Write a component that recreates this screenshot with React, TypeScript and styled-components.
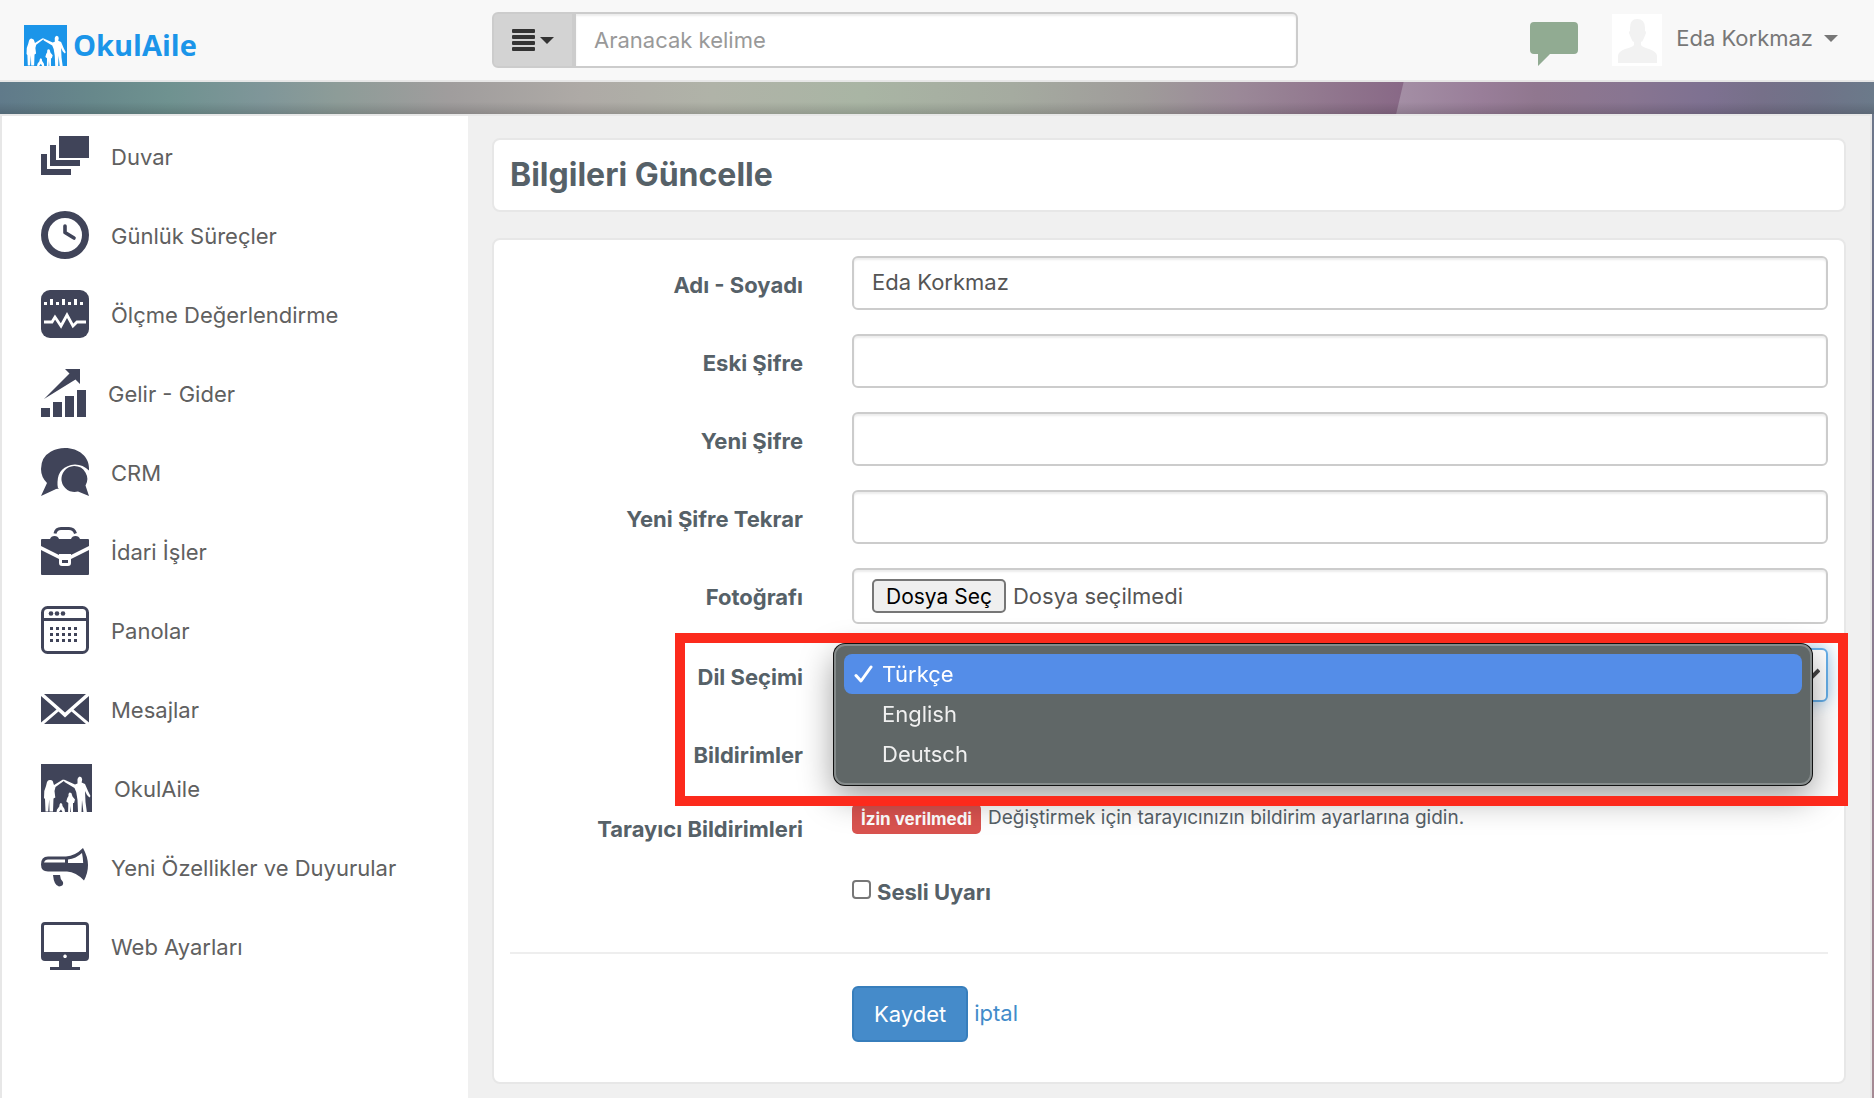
import React, { useState } from 'react';
import styled, { createGlobalStyle } from 'styled-components';

const ink = '#404459';
const slate = '#566168';

const GlobalStyle = createGlobalStyle`
  *, *::before, *::after { box-sizing: border-box; }
  body {
    margin: 0;
    color: ${slate};
    font-family: Inter, "Liberation Sans", sans-serif;
    font-size: 22px;
    line-height: 32px;
  }
  button, input, select { font: inherit; color: inherit; }
`;

const Page = styled.div`
  display: flex;
  flex-direction: column;
  min-height: 100vh;
  background: linear-gradient(#6b7a8a, #70708a 30%, #9b8494 75%, #a58a94);
`;

const Header = styled.header`
  display: flex;
  align-items: center;
  height: 82px;
  padding: 0 36px 0 24px;
  background: #f8f8f8;
  border-bottom: 2px solid #e7e7e7;
`;

const Brand = styled.a`
  display: flex;
  align-items: center;
  gap: 6px;
  flex: 0 0 468px;
  padding-top: 10px;
  color: #1b95e9;
  font: 700 29px/40px "Open Sans", "Noto Sans", sans-serif;
  text-decoration: none;
`;

const Search = styled.form`
  display: flex;
  flex: 0 1 806px;
  height: 56px;
`;

const SearchMenu = styled.button`
  display: flex;
  align-items: center;
  gap: 5px;
  width: 82px;
  padding: 0 18px;
  color: #333;
  background: #d3d3d3;
  border: 2px solid #ccc;
  border-radius: 6px 0 0 6px;
`;

const SearchInput = styled.input`
  flex: 1;
  min-width: 0;
  padding: 0 18px;
  color: #555;
  background: #fff;
  border: 2px solid #ccc;
  border-radius: 0 6px 6px 0;
  box-shadow: inset 0 2px 2px rgba(0, 0, 0, 0.075);
  &::placeholder { color: #999; opacity: 1; }
`;

const Account = styled.div`
  display: flex;
  align-items: center;
  margin-left: auto;
`;

const IconButton = styled.button`
  display: flex;
  margin-right: 34px;
  padding: 8px 0 0;
  background: none;
  border: 0;
`;

const Avatar = styled.svg`
  width: 50px;
  height: 52px;
  margin-right: 14px;
  background: #fff;
`;

const UserMenu = styled.button`
  display: flex;
  align-items: center;
  gap: 11px;
  padding: 0 0 4px;
  color: #777;
  background: none;
  border: 0;
`;

const Banner = styled.div`
  position: relative;
  height: 32px;
  background: linear-gradient(90deg, #607a8a, #67888b 5%, #6f9290 9%, #7f9699 14%, #8d9c98 18%,
    #a09d9d 24%, #aeaaa6 31%, #b0b3a8 38%, #a9b5a4 46%, #a5aba0 54%, #9f9b9a 61%, #9b8998 66%,
    #937a90 70%, #886886 75%);
  &::before {
    content: "";
    position: absolute;
    inset: 0;
    clip-path: polygon(74.9% 0, 100% 0, 100% 100%, 74.5% 100%);
    background: linear-gradient(90deg, #a48fa5 74.5%, #997e99 79%, #90778f 82%, #887591 87%,
      #7e7191 91%, #767089 94%, #6f7388 97%, #6b7a8a);
  }
  &::after {
    content: "";
    position: absolute;
    inset: 20px 0 0;
    background: linear-gradient(rgba(0, 0, 0, 0), rgba(0, 0, 0, 0.14));
  }
`;

const Body = styled.div`
  display: flex;
  flex: 1;
  margin-right: 2px;
  background: #f0f0f0;
  border: 2px solid #e7e7e7;
  border-bottom: 0;
`;

const Sidebar = styled.nav`
  flex: 0 0 466px;
  background: #fff;
`;

const NavList = styled.ul`
  margin: 0;
  padding: 1px 0 0;
  list-style: none;
`;

const NavLink = styled.a`
  display: flex;
  align-items: center;
  gap: 22px;
  height: 79px;
  padding-left: 39px;
  color: #606060;
  text-decoration: none;
  svg { flex: none; margin-bottom: 2px; }
`;

const Main = styled.main`
  flex: 1;
  min-width: 0;
  padding: 22px 24px 14px;
`;

const Panel = styled.section`
  padding: 16px;
  background: #fff;
  border: 2px solid #e7e7e7;
  border-radius: 8px;
  & + & { margin-top: 26px; }
`;

const Title = styled.h1`
  margin: 0;
  font-size: 32px;
  font-weight: 700;
  line-height: 38px;
`;

const Form = styled.form`
  display: flex;
  flex-direction: column;
  gap: 24px;
  padding-bottom: 24px;
`;

const Row = styled.div`
  display: grid;
  grid-template-columns: 293px minmax(0, 1fr);
  column-gap: 49px;
`;

const RowLabel = styled.label`
  height: 50px;
  padding-top: 13px;
  font-weight: 700;
  text-align: right;
`;

const Field = styled.div`
  grid-column: 2;
`;

const TextInput = styled.input`
  display: block;
  width: 100%;
  height: 54px;
  padding: 0 18px 2px;
  color: #555;
  background: #fff;
  border: 2px solid #ccc;
  border-radius: 6px;
  box-shadow: inset 0 2px 2px rgba(0, 0, 0, 0.075);
`;

const FileBox = styled.div`
  position: relative;
  display: flex;
  align-items: center;
  gap: 7px;
  height: 56px;
  padding: 0 18px;
  color: #555;
  border: 2px solid #ccc;
  border-radius: 6px;
  box-shadow: inset 0 2px 2px rgba(0, 0, 0, 0.075);
`;

const FileInput = styled.input`
  position: absolute;
  inset: 0;
  width: 100%;
  opacity: 0;
`;

const FileButton = styled.label`
  height: 34px;
  padding: 0 12px;
  color: #000;
  font-size: 21px;
  background: #efefef;
  border: 2px solid #767676;
  border-radius: 5px;
`;

const Highlight = styled.div`
  position: relative;
  display: flex;
  flex-direction: column;
  gap: 24px;
  &::after {
    content: "";
    position: absolute;
    z-index: 3;
    inset: -15px -20px -30px 165px;
    border: 10px solid #fc2a1c;
    pointer-events: none;
  }
`;

const SelectBox = styled(Field)`
  position: relative;
`;

const Select = styled.select`
  display: block;
  width: 100%;
  height: 54px;
  padding: 0 18px;
  color: #555;
  appearance: none;
  background: #fff;
  border: 2px solid #66afe9;
  border-radius: 6px;
  box-shadow: 0 0 16px rgba(102, 175, 233, 0.6);
`;

const Chevron = styled.svg`
  position: absolute;
  top: 19px;
  right: 8px;
`;

const Options = styled.ul`
  position: absolute;
  z-index: 2;
  top: -4px;
  left: -18px;
  right: 16px;
  margin: 0;
  padding: 8px 8px 9px;
  list-style: none;
  background: #606767;
  border: 2px solid #858b8b;
  border-radius: 11px;
  box-shadow: 0 0 0 1px #111, 0 12px 34px rgba(0, 0, 0, 0.4);
`;

const Option = styled.li<{ $active: boolean }>`
  display: flex;
  align-items: center;
  gap: 8px;
  height: 40px;
  padding-left: 10px;
  color: ${(p) => (p.$active ? '#fff' : '#f0f0f0')};
  background: ${(p) => (p.$active ? '#548de8' : 'transparent')};
  border-radius: 8px;
  svg { visibility: ${(p) => (p.$active ? 'visible' : 'hidden')}; }
`;

const Notice = styled(Field)`
  display: flex;
  align-items: flex-start;
  gap: 7px;
  height: 52px;
  padding-top: 4px;
  font-size: 19px;
  line-height: 28px;
`;

const Badge = styled.span`
  padding: 1px 9px;
  color: #fff;
  font-size: 17px;
  font-weight: 700;
  background: #d9534f;
  border-radius: 5px;
`;

const CheckLine = styled.label`
  grid-column: 2;
  display: flex;
  align-items: center;
  gap: 6px;
  font-weight: 700;
`;

const Checkbox = styled.input`
  appearance: none;
  width: 19px;
  height: 19px;
  margin: 0 0 5px;
  background: #fff;
  border: 2px solid #777;
  border-radius: 4px;
  &:checked { background: #458bca; }
`;

const Divider = styled.hr`
  width: 100%;
  margin: 20px 0 8px;
  border: 0;
  border-top: 2px solid #eee;
`;

const Actions = styled.div`
  grid-column: 2;
  display: flex;
  align-items: center;
  gap: 6px;
`;

const SaveButton = styled.button`
  height: 56px;
  padding: 0 20px;
  color: #fff;
  background: #458bca;
  border: 2px solid #377ebc;
  border-radius: 6px;
`;

const CancelLink = styled.a`
  padding-bottom: 3px;
  color: #428bca;
  text-decoration: none;
`;

const Caret = () => (
  <svg width="14" height="7" viewBox="0 0 14 7" fill="currentColor" aria-hidden="true">
    <path d="M0 0h14L7 7z" />
  </svg>
);

const Family = ({ width, height, color }: { width: number; height: number; color: string }) => (
  <svg width={width} height={height} viewBox="0 0 51 48" preserveAspectRatio="none" aria-hidden="true">
    <path fill={color} d="M0 0h51v48H0z" />
    <g fill="#fff">
      <path d="M6 18q1-2.500 3.500-2 2.500 0 2.800 3l.7 2 9-5.500 1.500 1-9 6.500-1 4 .8 6.500-1.800 1 -.5 13H8.500l-.3-12-1 12H4.500L4 35l-1-1 .3-7L5 22z" />
      <path d="M22.500 15.500 24 16l10 4.500 2.500-1V16.500q-.5-3 2.300-4 2.700.5 2.300 3.500l-.5 2.500 3.400 1.500 3 7 2.500 5-1 1.500-2.500-2.500-2-4 .5 11 1.500 11h-3.500L41 36l-.5 12H37l-.5-12-1.300-8-1.700-4-10-6z" />
      <path d="M29 28.500q2 0 2 2.500l.5 1.500 2.500 3-1 3.500-1 0V48h-2l-.4-6-.5 6h-2l.2-9-2-1.500 1-3.500 1.200-2Q27.200 28.500 29 28.500z" />
      <path d="M20 39q1.500.5 1.500 3l2 3 .5 3h-2.500L20 45.500 18 48h-2.500l.5-2.500 2.300-3Q18.500 39 20 39z" />
    </g>
  </svg>
);

const Icon = ({ w = 48, children }: { w?: number; children: React.ReactNode }) => (
  <svg width={w} height="48" viewBox={`0 0 ${w} 48`} fill={ink} aria-hidden="true">
    {children}
  </svg>
);

const navItems: { label: string; icon: React.ReactNode }[] = [
  {
    label: 'Duvar',
    icon: <Icon><path d="M18 4h30v22H18zM9 13h6v15h24v6H9zM0 22h6v15h24v6H0z" /></Icon>,
  },
  {
    label: 'Günlük Süreçler',
    icon: (
      <Icon>
        <circle cx="24" cy="24" r="20.500" fill="none" stroke={ink} strokeWidth="7" />
        <path d="M24 15v6.500l9 5.500" fill="none" stroke={ink} strokeWidth="3.600" strokeLinecap="round" strokeLinejoin="round" />
      </Icon>
    ),
  },
  {
    label: 'Ölçme Değerlendirme',
    icon: (
      <Icon>
        <rect width="48" height="48" rx="9" />
        <path fill="#fff" d="M3 12h3v3H3zM9 9h3v6H9zM15 12h3v3h-3zM21 9h3v6h-3zM27 12h3v3h-3zM33 9h3v6h-3zM39 12h3v3h-3z" />
        <path d="M3 32h8l3-5 6 9 6-11 6 11 4-4h9" fill="none" stroke="#fff" strokeWidth="2.800" />
      </Icon>
    ),
  },
  {
    label: 'Gelir - Gider',
    icon: (
      <Icon w={45}>
        <path d="M0 39h9v9H0zM12 33h9v15h-9zM24 27h9v21h-9zM36 21h9v27h-9zM24 0h15v15l-4.500-4.500L3 30 28.500 4.500z" />
      </Icon>
    ),
  },
  {
    label: 'CRM',
    icon: (
      <Icon>
        <path d="M24 0c14 0 24 9 24 20v2.500Q42 16.500 34 16.500 17 18 16.500 34v3q0 3 1.500 4-2.500-.5-4.500.7L0 48l6-13Q0 29 0 21 0 9 10 3.500 16 0 24 0z" />
        <path d="M33 18a13 13 0 0 1 11.500 19.500L48 48l-11-4.500A13 13 0 1 1 33 18z" />
      </Icon>
    ),
  },
  {
    label: 'İdari İşler',
    icon: (
      <Icon>
        <path d="M14 6.500Q15 1.500 20 1.500h8q5 0 6.500 5" fill="none" stroke={ink} strokeWidth="3" />
        <path d="M1 12h8q1-3 4.500-3t4.500 3h12q1-3 4.500-3t4.500 3h8q1 0 1 1v6L30 28v-1H18v1L0 19v-6q0-1 1-1zM0 23l18 9v4q0 3 3 3h6q3 0 3-3v-4l18-9v24q0 1-1 1H1q-1 0-1-1z" />
        <path d="M21 33h6v3h-6z" />
      </Icon>
    ),
  },
  {
    label: 'Panolar',
    icon: (
      <Icon>
        <rect x="1.500" y="1.500" width="45" height="45" rx="5" fill="none" stroke={ink} strokeWidth="3" />
        <path d="M2 12h44v3H2z" />
        {[10, 16, 22].map((x) => <circle key={x} cx={x} cy="7.500" r="2.300" />)}
        {[21, 27, 33].map((y) => (
          <path key={y} d={`M9 ${y}h3v3H9zM15 ${y}h3v3h-3zM21 ${y}h3v3h-3zM27 ${y}h3v3h-3zM33 ${y}h3v3h-3z`} />
        ))}
      </Icon>
    ),
  },
  {
    label: 'Mesajlar',
    icon: (
      <Icon>
        <path d="M3 9h42L24 27.500zM0 11l15.500 13.500L0 37.500zM48 11 32.500 24.500 48 37.500zM3 39l14.500-12.500L24 32.500l6.500-6L45 39z" />
      </Icon>
    ),
  },
  { label: 'OkulAile', icon: <Family width={51} height={48} color={ink} /> },
  {
    label: 'Yeni Özellikler ve Duyurular',
    icon: (
      <Icon>
        <path d="M42 5q5 9 5 17 0 8-4 15.500Q35 29 26 28.500H7q-7 0-7-7 0-8 7-8h18Q34 13 42 5z" />
        <path fill="#fff" d="M7 16.500h17v3H3q1-3 4-3zM27 16.500q8-1 14-6.500 1 5 1.200 10H27z" />
        <path d="M12 32h7q0 4 3 7 1 4-4 4.500-5-1-6-11.500z" />
      </Icon>
    ),
  },
  {
    label: 'Web Ayarları',
    icon: (
      <Icon>
        <path fillRule="evenodd" d="M4 0h40q4 0 4 4v31q0 4-4 4H31v6h8v3H9v-3h9v-6H4q-4 0-4-4V4q0-4 4-4zm0 3q-1 0-1 1v26h42V4q0-1-1-1zM24 32.500a1.800 1.800 0 1 0 .1 0z" />
      </Icon>
    ),
  },
];

const languages = ['Türkçe', 'English', 'Deutsch'];

export default function App() {
  const [language, setLanguage] = useState('Türkçe');
  const [name, setName] = useState('Eda Korkmaz');

  return (
    <Page>
      <GlobalStyle />
      <Header>
        <Brand href="#">
          <Family width={43} height={41} color="#1b95e9" />
          OkulAile
        </Brand>
        <Search role="search">
          <SearchMenu type="button" aria-label="Arama türü">
            <svg width="23" height="22" viewBox="0 0 23 22" fill="currentColor" aria-hidden="true">
              {[0, 6, 12, 18].map((y) => <rect key={y} y={y} width="23" height="4" rx="1" />)}
            </svg>
            <Caret />
          </SearchMenu>
          <SearchInput type="search" aria-label="Arama" placeholder="Aranacak kelime" />
        </Search>
        <Account>
          <IconButton type="button" aria-label="Mesajlar">
            <svg width="48" height="44" viewBox="0 0 48 44" fill="#91ab92" aria-hidden="true">
              <path d="M4 0h40q4 0 4 4v24q0 4-4 4H20L8 44V32H4q-4 0-4-4V4q0-4 4-4z" />
            </svg>
          </IconButton>
          <Avatar viewBox="0 0 50 52" fill="#f2f2f2" aria-hidden="true">
            <path d="M25 5q8 0 8 9v3q1 0 1 2l-2 5q-1 3-3 4v3q1 2 8 4 8 3 8 7v7H6v-7q0-4 7-7 8-2 9-4v-3q-2-1-3-4l-2-5q0-2 1-2v-3q0-9 7-9z" />
          </Avatar>
          <UserMenu type="button">Eda Korkmaz <Caret /></UserMenu>
        </Account>
      </Header>
      <Banner />
      <Body>
        <Sidebar>
          <NavList>
            {navItems.map((item) => (
              <li key={item.label}>
                <NavLink href="#">{item.icon}{item.label}</NavLink>
              </li>
            ))}
          </NavList>
        </Sidebar>
        <Main>
          <Panel><Title>Bilgileri Güncelle</Title></Panel>
          <Panel>
            <Form onSubmit={(e) => e.preventDefault()}>
              <Row>
                <RowLabel htmlFor="name">Adı - Soyadı</RowLabel>
                <TextInput id="name" value={name} onChange={(e) => setName(e.target.value)} />
              </Row>
              <Row>
                <RowLabel htmlFor="old">Eski Şifre</RowLabel>
                <TextInput id="old" type="password" />
              </Row>
              <Row>
                <RowLabel htmlFor="new">Yeni Şifre</RowLabel>
                <TextInput id="new" type="password" />
              </Row>
              <Row>
                <RowLabel htmlFor="repeat">Yeni Şifre Tekrar</RowLabel>
                <TextInput id="repeat" type="password" />
              </Row>
              <Row>
                <RowLabel htmlFor="photo">Fotoğrafı</RowLabel>
                <FileBox>
                  <FileInput id="photo" type="file" />
                  <FileButton htmlFor="photo">Dosya Seç</FileButton>
                  <span>Dosya seçilmedi</span>
                </FileBox>
              </Row>
              <Highlight>
                <Row>
                  <RowLabel htmlFor="language">Dil Seçimi</RowLabel>
                  <SelectBox>
                    <Select id="language" value={language} onChange={(e) => setLanguage(e.target.value)}>
                      {languages.map((l) => <option key={l}>{l}</option>)}
                    </Select>
                    <Chevron width="16" height="14" viewBox="0 0 16 14" fill="none" stroke="#444" strokeWidth="4" aria-hidden="true">
                      <path d="M1 3l7 7 7-7" />
                    </Chevron>
                    <Options role="listbox" aria-label="Dil Seçimi">
                      {languages.map((l) => (
                        <Option key={l} role="option" aria-selected={l === language} $active={l === language} onClick={() => setLanguage(l)}>
                          <svg width="20" height="20" viewBox="0 0 20 20" fill="none" stroke="#fff" strokeWidth="3" strokeLinecap="round" strokeLinejoin="round" aria-hidden="true">
                            <path d="M2 11.500 7 17 17 3" />
                          </svg>
                          {l}
                        </Option>
                      ))}
                    </Options>
                  </SelectBox>
                </Row>
                <Row><RowLabel as="span">Bildirimler</RowLabel></Row>
              </Highlight>
              <Row>
                <RowLabel as="span">Tarayıcı Bildirimleri</RowLabel>
                <Notice>
                  <Badge>İzin verilmedi</Badge>
                  <span>Değiştirmek için tarayıcınızın bildirim ayarlarına gidin.</span>
                </Notice>
              </Row>
              <Row>
                <CheckLine><Checkbox type="checkbox" />Sesli Uyarı</CheckLine>
              </Row>
              <Divider />
              <Row>
                <Actions>
                  <SaveButton type="submit">Kaydet</SaveButton>
                  <CancelLink href="#">iptal</CancelLink>
                </Actions>
              </Row>
            </Form>
          </Panel>
        </Main>
      </Body>
    </Page>
  );
}
